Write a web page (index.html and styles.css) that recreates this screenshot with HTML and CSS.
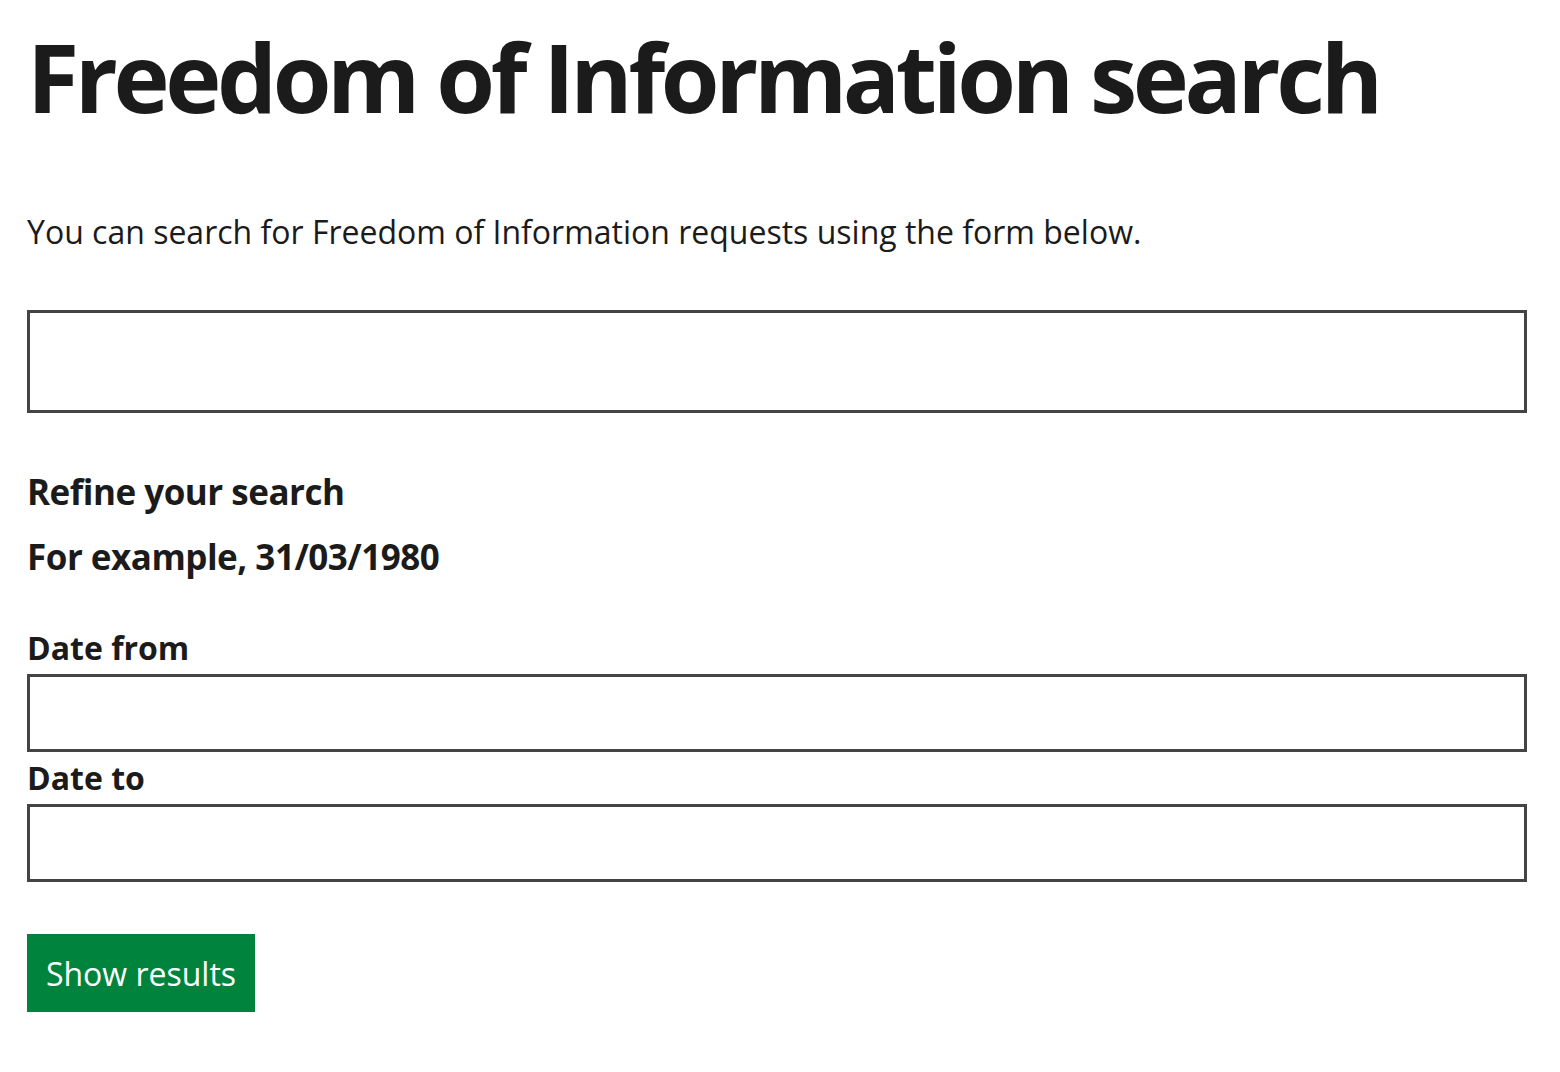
FILE: index.html
```html
<!DOCTYPE html>
<html lang="en">
<head>
<meta charset="utf-8">
<title>Freedom of Information search</title>
<link rel="stylesheet" href="styles.css">
</head>
<body>
<main class="page">
  <h1 class="title">Freedom of Information search</h1>
  <p class="intro">You can search for Freedom of Information requests using the form below.</p>
  <form class="search-form">
    <input class="search-input" type="text" aria-label="Search">
    <h2 class="refine">Refine your search</h2>
    <p class="hint">For example, 31/03/1980</p>
    <div class="field field-first">
      <label class="label" for="from">Date from</label>
      <input class="date-input" id="from" type="text">
    </div>
    <div class="field field-second">
      <label class="label" for="to">Date to</label>
      <input class="date-input" id="to" type="text">
    </div>
    <button class="button" type="button">Show results</button>
  </form>
</main>
</body>
</html>
```

FILE: styles.css
```css
* { box-sizing: border-box; }
html, body { margin: 0; padding: 0; background: #fff; }
body {
  font-family: "Open Sans", "Noto Sans", sans-serif;
  color: #1b1b1b;
}
.page {
  width: 1500px;
  margin-left: 27px;
  padding-top: 18px;
}
.title {
  margin: 0;
  font-size: 95px;
  line-height: 116px;
  font-weight: 700;
  letter-spacing: -4.4px;
}
.intro {
  margin: 74px 0 0;
  font-size: 32px;
  line-height: 48px;
  font-weight: 400;
}
.search-form {
  display: flex;
  flex-direction: column;
  align-items: flex-start;
}
.search-input {
  margin-top: 54px;
  width: 1500px;
  height: 103px;
  border: 3px solid #444;
  border-radius: 0;
  padding: 0 16px;
  font: inherit;
  font-size: 32px;
  outline: none;
}
.refine, .hint {
  margin: 0;
  font-size: 35px;
  line-height: 65px;
  font-weight: 700;
  letter-spacing: -0.5px;
}
.refine { margin-top: 46px; }
.field {
  display: flex;
  flex-direction: column;
  width: 1500px;
}
.field-first { margin-top: 39px; }
.field-second { margin-top: 6px; }
.label {
  font-size: 32px;
  line-height: 40px;
  font-weight: 700;
  margin-bottom: 6px;
}
.date-input {
  width: 1500px;
  height: 78px;
  border: 3px solid #444;
  border-radius: 0;
  padding: 0 16px;
  font: inherit;
  font-size: 32px;
  outline: none;
}
.button {
  margin-top: 52px;
  width: 228px;
  height: 78px;
  background: #00843d;
  color: #fff;
  border: 0;
  border-radius: 0;
  font-family: "Open Sans", "Noto Sans", sans-serif;
  font-size: 32px;
  font-weight: 400;
  padding: 0;
}
```
